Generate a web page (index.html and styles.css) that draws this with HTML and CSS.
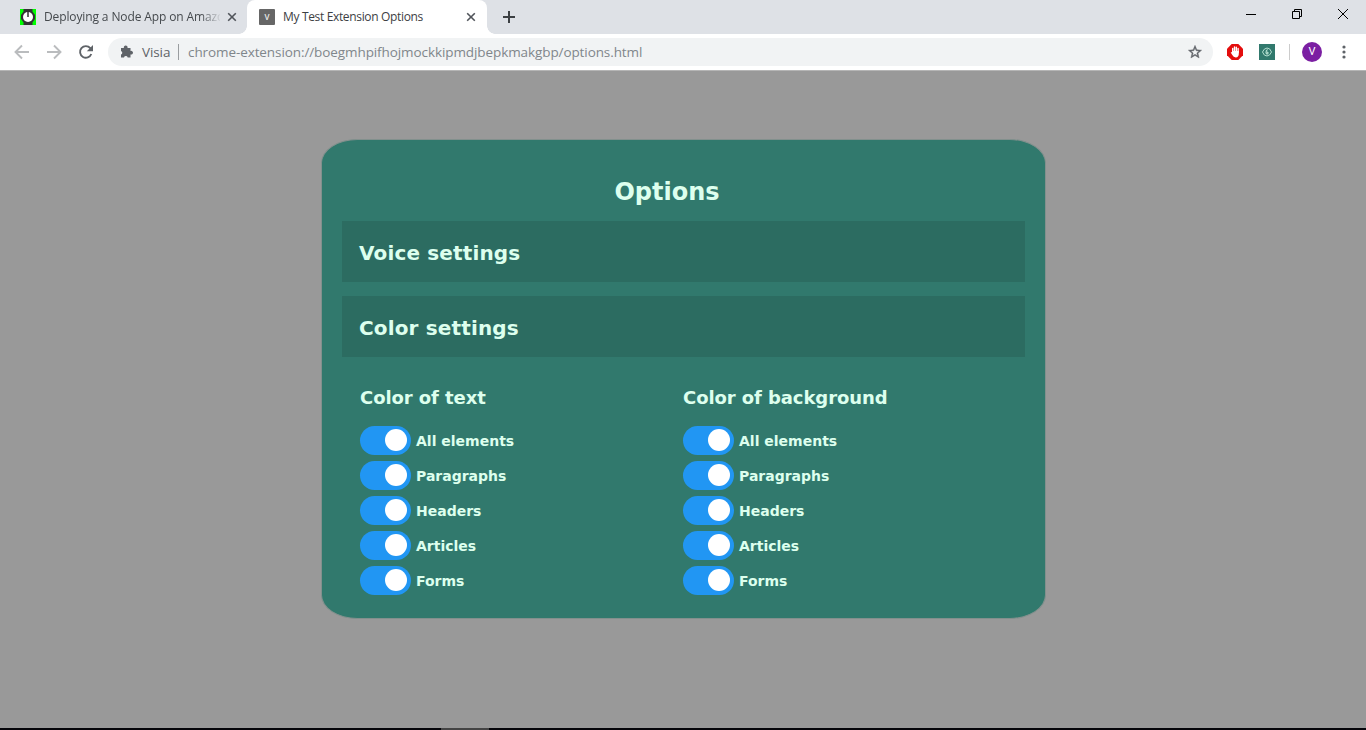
FILE: index.html
```html
<!DOCTYPE html>
<html lang="en">
<head>
<meta charset="utf-8">
<title>My Test Extension Options</title>
<link rel="stylesheet" href="styles.css">
</head>
<body>
<header class="tabstrip">
  <div class="tab">
    <svg class="favicon" viewBox="0 0 16 16"><path fill="#0f0" d="M0 0h16v16H0z"/><path fill="#333" d="M3.500 0h9v2.500L15 6v4l-2.500 3.500V16h-9v-2.500L1 10V6l2.500-3.500z"/><circle cx="8" cy="8" r="5" fill="#fff"/><path stroke="#333" stroke-width="1.500" d="M8 2.500V8"/></svg>
    <span class="tab-title tab-title-faded">Deploying a Node App on Amazo</span>
    <svg class="tab-close" viewBox="0 0 10 10"><path d="M1.200 1.200l7.600 7.600M8.800 1.200L1.200 8.800"/></svg>
  </div>
  <div class="tab tab-active">
    <span class="favicon favicon-letter">V</span>
    <span class="tab-title tab-title-active">My Test Extension Options</span>
    <svg class="tab-close" viewBox="0 0 10 10"><path d="M1.200 1.200l7.600 7.600M8.800 1.200L1.200 8.800"/></svg>
  </div>
  <svg class="new-tab" viewBox="0 0 12 12"><path d="M6 0v12M0 6h12"/></svg>
  <div class="window-controls">
    <svg viewBox="0 0 12 12"><path d="M1 6.500h10"/></svg>
    <svg viewBox="0 0 12 12"><path d="M1.500 3.500h7v7h-7zM3.500 3.500v-2h7v7h-2"/></svg>
    <svg viewBox="0 0 12 12"><path d="M1 1l10 10M11 1L1 11"/></svg>
  </div>
</header>
<nav class="toolbar">
  <svg class="nav-icon nav-disabled" viewBox="0 0 16 16"><path d="M15 8H2M8 1.500L1.500 8 8 14.500"/></svg>
  <svg class="nav-icon nav-disabled" viewBox="0 0 16 16"><path d="M1 8h13M8 1.500L14.500 8 8 14.500"/></svg>
  <svg class="nav-icon" viewBox="0 0 16 16"><path d="M13.300 10A5.800 5.800 0 1 1 12.300 4.200L13.500 5.600"/><path class="solid" d="M15 1v6.200H8.800z"/></svg>
  <div class="omnibox">
    <svg class="puzzle" viewBox="0 0 14 14"><path d="M1 3h2.900a1.900 1.900 0 1 1 3.600 0h3v2.900a1.900 1.900 0 1 1 0 3.600v3H7.700a1.900 1.900 0 0 0-3.700 0H1V9.500a1.900 1.900 0 0 0 0-3.600z"/></svg>
    <span class="origin">Visia</span>
    <span class="origin-rule"></span>
    <span class="url">chrome-extension://boegmhpifhojmockkipmdjbepkmakgbp/options.html</span>
    <svg class="star" viewBox="0 0 24 24"><path d="M22 9.240l-7.190-.62L12 2 9.190 8.630 2 9.240l5.460 4.730L5.820 21 12 17.270 18.180 21l-1.630-7.030L22 9.240zM12 15.400l-3.760 2.270 1-4.280-3.320-2.880 4.380-.38L12 6.100l1.710 4.040 4.380.38-3.320 2.880 1 4.280L12 15.400z"/></svg>
  </div>
  <svg class="ext" viewBox="0 0 16 16"><path fill="#e40d0d" d="M4.700 0h6.600L16 4.700v6.600L11.300 16H4.700L0 11.300V4.700z"/><path d="M5.700 8V4.500M7.500 8V3M9.300 8V3.200M11.100 8.500V4.500" stroke="#fff" stroke-width="1.400" stroke-linecap="round"/><path fill="#fff" d="M5 7h6.800v3.200Q11.600 13.200 8.900 13.400 6.500 13.500 5.300 11L3.700 8.500q.5-.8 1.300 0z"/></svg>
  <svg class="ext ext-visia" viewBox="0 0 16 16"><path fill="#31796d" d="M0 0h16v16H0z"/><g fill="none" stroke="#b4dfd0"><path d="M3.500 8Q5 4.200 8 4t4.500 4Q11 11.800 8 12T3.500 8z" stroke-width="1"/><path d="M8.700 5.500Q7 6 7 8.500q.2 1.700 1.800 1.300.8-1.500-1-1.800" stroke-width="1.200"/></g></svg>
  <span class="toolbar-rule"></span>
  <span class="avatar">V</span>
  <svg class="menu" viewBox="0 0 4 14"><circle cx="2" cy="2" r="1.600"/><circle cx="2" cy="7" r="1.600"/><circle cx="2" cy="12" r="1.600"/></svg>
</nav>
<main class="page">
  <section class="panel">
    <h1 class="title">Options</h1>
    <h2 class="bar">Voice settings</h2>
    <h2 class="bar">Color settings</h2>
    <div class="columns">
      <div class="column">
        <h3 class="group">Color of text</h3>
        <div class="option"><span class="switch"></span>All elements</div>
        <div class="option"><span class="switch"></span>Paragraphs</div>
        <div class="option"><span class="switch"></span>Headers</div>
        <div class="option"><span class="switch"></span>Articles</div>
        <div class="option"><span class="switch"></span>Forms</div>
      </div>
      <div class="column">
        <h3 class="group">Color of background</h3>
        <div class="option"><span class="switch"></span>All elements</div>
        <div class="option"><span class="switch"></span>Paragraphs</div>
        <div class="option"><span class="switch"></span>Headers</div>
        <div class="option"><span class="switch"></span>Articles</div>
        <div class="option"><span class="switch"></span>Forms</div>
      </div>
    </div>
  </section>
</main>
<footer class="taskbar"><span class="task"></span></footer>
</body>
</html>
```
FILE: styles.css
```css
* { box-sizing: border-box; }
body { margin: 0; width: 1366px; height: 730px; overflow: hidden; display: flex; flex-direction: column; font-family: "Open Sans", "Noto Sans", sans-serif; background: #999; }
svg { display: block; flex: none; fill: none; }

.tabstrip { height: 34px; flex: none; display: flex; background: #dee1e6; }
.tab { width: 247px; height: 34px; padding: 0 10px 0 20px; display: flex; align-items: center; }
.tab-active { position: relative; width: 240px; padding: 0 11px 0 12px; background: #fff; border-radius: 8px 8px 0 0; }
.tab-active::before, .tab-active::after { content: ""; position: absolute; bottom: 0; width: 8px; height: 8px; }
.tab-active::before { left: -8px; background: radial-gradient(circle at 0 0, transparent 7.5px, #fff 8px); }
.tab-active::after { right: -8px; background: radial-gradient(circle at 100% 0, transparent 7.5px, #fff 8px); }
.favicon { width: 16px; height: 16px; flex: none; }
.favicon-letter { background: #666; color: #eee; border-radius: 1px; font: 600 8px/16px "Open Sans", sans-serif; text-align: center; }
.tab-title { flex: 1; margin-left: 8px; white-space: nowrap; font-size: 12px; line-height: 18px; letter-spacing: -0.12px; color: #45494d; }
.tab-title-faded { flex: none; width: 176px; margin-right: 7px; -webkit-mask-image: linear-gradient(90deg, #000 156px, transparent 178px); mask-image: linear-gradient(90deg, #000 156px, transparent 178px); }
.tab-title-active { color: #3c4043; letter-spacing: -0.34px; }
.tab-close { width: 10px; height: 10px; stroke: #50545a; stroke-width: 1.6; }
.new-tab { width: 12px; height: 12px; margin: 11px 0 0 16px; stroke: #3c4043; stroke-width: 2; }
.window-controls { margin-left: auto; padding: 8px 17px 0 0; display: flex; gap: 34px; }
.window-controls svg { width: 12px; height: 12px; stroke: #000; stroke-width: 1; }

.toolbar { height: 37px; flex: none; display: flex; align-items: center; padding: 0 20px 1px 14px; background: #fff; border-bottom: 1px solid #b5b5b5; }
.nav-icon { width: 16px; height: 16px; margin-right: 16px; stroke: #5f6368; stroke-width: 1.9; }
.nav-icon .solid { fill: #5f6368; stroke: none; }
.nav-disabled { stroke: #babcbe; }
.omnibox { width: 1105px; height: 28px; margin-left: -2px; padding: 0 10px 0 12px; display: flex; align-items: center; background: #f1f3f4; border-radius: 14px; font-size: 13.5px; white-space: nowrap; }
.puzzle { width: 14px; height: 14px; fill: #5f6368; }
.origin { width: 36px; margin-left: 8px; color: #5f6368; letter-spacing: -0.1px; }
.origin-rule { width: 1px; height: 16px; margin-right: 9px; background: #9a9da0; }
.url { color: #80868b; letter-spacing: -0.09px; }
.star { width: 16px; height: 16px; margin-left: auto; fill: #5f6368; stroke: #5f6368; stroke-width: 0.6; }
.ext { width: 16px; height: 16px; margin-left: 14px; }
.ext-visia { margin-left: 16px; }
.toolbar-rule { width: 1px; height: 16px; margin: 0 12px 0 14px; background: #ccc; }
.avatar { width: 20px; height: 20px; border-radius: 50%; background: #7b1fa2; color: #fff; font: 11px/20px Roboto, sans-serif; text-align: center; }
.menu { width: 4px; height: 14px; margin-left: auto; fill: #5f6368; }

.page { flex: 1; padding: 68px 0 0 321px; font-family: "DejaVu Sans", Verdana, sans-serif; font-weight: 700; color: #dfe; }
.panel { width: 725px; height: 480px; padding: 36px 20px 0; background: #31796d; border: 1px solid #82908d; border-radius: 5%; }
.title { margin: 0 33px 13px 0; font-size: 24px; line-height: 32px; text-align: center; }
.bar { height: 61px; margin: 0 0 14px; padding-left: 17px; font-size: 20px; line-height: 64px; letter-spacing: 0.15px; background: #2c6c61; }
.columns { display: flex; padding: 14px 0 0 18px; }
.column { width: 323px; }
.group { margin: 0 0 16px; font-size: 18px; line-height: 25px; letter-spacing: -0.08px; }
.option { display: flex; align-items: flex-start; gap: 5px; height: 29px; margin-bottom: 6px; font-size: 14px; line-height: 31px; }
.switch { width: 51px; height: 29px; flex: none; padding: 3px 0 0 25px; border-radius: 15px; background: #2196f3; }
.switch::after { content: ""; display: block; width: 22px; height: 22px; border-radius: 50%; background: #fff; }

.taskbar { height: 2px; flex: none; padding-left: 441px; background: #05050a; }
.task { display: block; width: 48px; height: 2px; background: #444; }
```
